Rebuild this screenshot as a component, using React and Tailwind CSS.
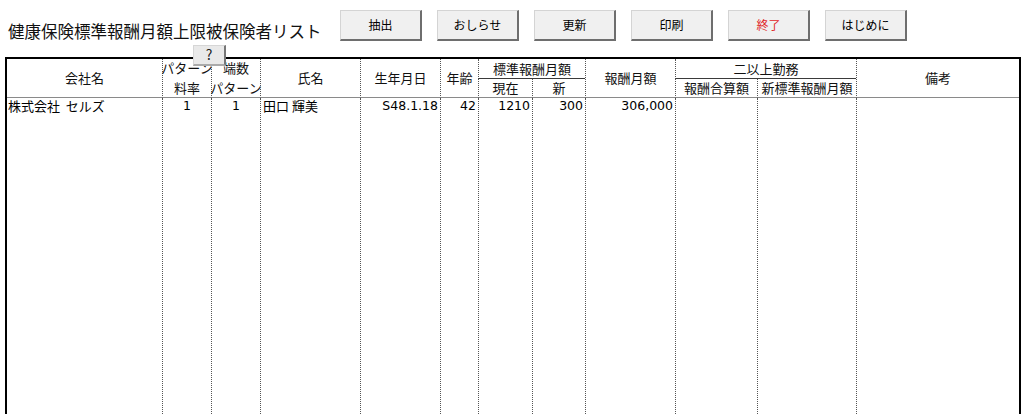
const jp = "font-['Noto_Sans_CJK_JP',sans-serif]";
const num = "font-['DejaVu_Sans','Noto_Sans_CJK_JP',sans-serif]";
const dot = "border-l border-dotted border-l-[#555]";
const hb = "border-b [border-bottom-style:solid] border-b-[#8a8a8a]";
const gb = "border-b [border-bottom-style:solid] border-b-[#3a3a3a]";

const buttons = [
  { label: "抽出" },
  { label: "おしらせ" },
  { label: "更新" },
  { label: "印刷" },
  { label: "終了", red: true },
  { label: "はじめに" },
];

function Btn({ label, red }) {
  return (
    <button
      className={`w-[82px] h-[31px] bg-[#f0f0f0] border border-[#d4d4d4] border-r-2 border-b-2 border-r-[#6e6e6e] border-b-[#6e6e6e] text-[12px] ${
        red ? "text-[#e0282a]" : "text-black"
      }`}
    >
      {label}
    </button>
  );
}

export default function App() {
  return (
    <div className={`relative w-[1024px] h-[414px] overflow-hidden bg-white text-black ${jp}`}>
      <div className="flex h-[57px]">
        <div className="w-[340px] pl-[8px] pt-[20px] text-[16.5px] leading-[23px] text-[#111]">
          健康保険標準報酬月額上限被保険者リスト
        </div>
        <div className="flex gap-[15px] pt-[10px] items-start">
          {buttons.map((b) => (
            <Btn key={b.label} {...b} />
          ))}
        </div>
      </div>

      <div className="ml-[5px] w-[1016px] h-[357px] border-t-2 border-l-2 border-r-2 border-black">
        <div className="grid grid-cols-[155px_49px_49px_100px_80px_38px_54px_53px_90px_82px_99px_1fr] grid-rows-[20px_19px_1fr] h-full text-[13px] text-[#111]">
          <div className={`row-span-2 flex items-center justify-center ${hb}`}>会社名</div>
          <div className={`row-span-2 flex flex-col items-center justify-center leading-[20px] whitespace-nowrap ${dot} ${hb}`}>
            <span>パターン</span>
            <span>料率</span>
          </div>
          <div className={`row-span-2 flex flex-col items-center justify-center leading-[20px] whitespace-nowrap ${dot} ${hb}`}>
            <span>端数</span>
            <span>パターン</span>
          </div>
          <div className={`row-span-2 flex items-center justify-center ${dot} ${hb}`}>氏名</div>
          <div className={`row-span-2 flex items-center justify-center ${dot} ${hb}`}>生年月日</div>
          <div className={`row-span-2 flex items-center justify-center ${dot} ${hb}`}>年齢</div>
          <div className={`col-span-2 flex items-center justify-center ${dot} ${gb}`}>標準報酬月額</div>
          <div className={`row-span-2 flex items-center justify-center ${dot} ${hb}`}>報酬月額</div>
          <div className={`col-span-2 flex items-center justify-center ${dot} ${gb}`}>二以上勤務</div>
          <div className={`row-span-2 flex items-center justify-center ${dot} ${hb}`}>備考</div>
          <div className={`flex items-center justify-center ${dot} ${hb}`}>現在</div>
          <div className={`flex items-center justify-center ${dot} ${hb}`}>新</div>
          <div className={`flex items-center justify-center whitespace-nowrap ${dot} ${hb}`}>報酬合算額</div>
          <div className={`flex items-center justify-center whitespace-nowrap ${dot} ${hb}`}>新標準報酬月額</div>

          <div className="pl-[1px] leading-[15px] text-black">株式会社&nbsp;&nbsp;セルズ</div>
          <div className={`text-center leading-[15px] text-[12.5px] text-black ${num} ${dot}`}>1</div>
          <div className={`text-center leading-[15px] text-[12.5px] text-black ${num} ${dot}`}>1</div>
          <div className={`pl-[2px] leading-[15px] text-black ${dot}`}>田口 輝美</div>
          <div className={`text-right pr-[2px] leading-[15px] text-[12.5px] text-black ${num} ${dot}`}>S48.1.18</div>
          <div className={`text-right pr-[2px] leading-[15px] text-[12.5px] text-black ${num} ${dot}`}>42</div>
          <div className={`text-right pr-[2px] leading-[15px] text-[12.5px] text-black ${num} ${dot}`}>1210</div>
          <div className={`text-right pr-[2px] leading-[15px] text-[12.5px] text-black ${num} ${dot}`}>300</div>
          <div className={`text-right pr-[2px] leading-[15px] text-[12.5px] text-black ${num} ${dot}`}>306,000</div>
          <div className={dot} />
          <div className={dot} />
          <div className={dot} />
        </div>
      </div>

      <div className="absolute left-[193px] top-[45px] w-[33px] h-[21px] bg-[#e9e9e9] border border-[#d6d6d6] border-r-2 border-b-2 border-r-[#777] border-b-[#aaa] flex items-start justify-center text-[14px] leading-[17px] text-[#222]">
        ?
      </div>
    </div>
  );
}
